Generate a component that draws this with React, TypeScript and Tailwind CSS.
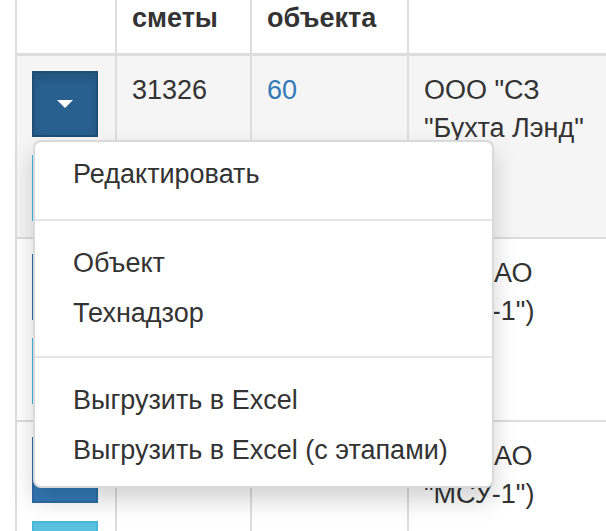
import React from 'react';

type Row = {
  id: string;
  objectId: string;
  customer: string;
  open?: boolean;
  hover?: boolean;
};

const rows: Row[] = [
  { id: '31326', objectId: '60', customer: 'ООО "СЗ "Бухта Лэнд"', open: true, hover: true },
  { id: '31325', objectId: '59', customer: 'ДСК (АО "МСУ-1")' },
  { id: '31324', objectId: '58', customer: 'ДСК (АО "МСУ-1")' },
];

function Caret() {
  return <span className="inline-block h-0 w-0 border-x-[8px] border-t-[8px] border-x-transparent border-t-white" />;
}

function ActionButtons({ open }: { open?: boolean }) {
  return (
    <div className="flex flex-col gap-[18px]">
      <button
        className={
          open
            ? 'flex h-[66px] w-[66px] items-center justify-center border-2 border-[#204d74] bg-[#286090] shadow-[inset_0_6px_10px_rgba(0,0,0,0.125)]'
            : 'flex h-[66px] w-[66px] items-center justify-center border-2 border-[#2e6da4] bg-[#337ab7]'
        }
      >
        <Caret />
      </button>
      <button className="h-[66px] w-[66px] border-2 border-[#46b8da] bg-[#5bc0de]" />
    </div>
  );
}

const menuItems = [['Редактировать'], ['Объект', 'Технадзор'], ['Выгрузить в Excel', 'Выгрузить в Excel (с этапами)']];

function DropdownMenu() {
  return (
    <ul className="absolute left-[33px] top-[140px] w-[461px] rounded-[8px] border-2 border-[rgba(0,0,0,0.15)] bg-white pb-[10px] pt-[7px] shadow-[0_12px_23px_rgba(0,0,0,0.175)]">
      {menuItems.map((group, gi) => (
        <React.Fragment key={gi}>
          {gi > 0 && <li className={gi === 1 ? 'mb-[17px] mt-[19px] h-[2px] bg-[#e5e5e5]' : 'my-[17px] h-[2px] bg-[#e5e5e5]'} />}
          {group.map((label) => (
            <li key={label} className="whitespace-nowrap px-[38px] py-[6px] text-[#333]">
              {label}
            </li>
          ))}
        </React.Fragment>
      ))}
    </ul>
  );
}

const th = 'border-2 border-b-[3px] border-[#ddd] px-[15px] pb-[15px] pt-0 text-left align-bottom font-bold';
const td = 'border-2 border-[#ddd] px-[15px] pb-[16px] pt-[15px] align-top';

export default function App() {
  return (
    <div className="relative h-[531px] w-[606px] overflow-hidden bg-white font-['Liberation_Sans',Arial,sans-serif] text-[27px] leading-[38.6px] text-[#333]">
      <div className="mt-[-3px] pl-[15px]">
        <table className="w-[624px] table-fixed border-collapse border-2 border-[#ddd]">
          <colgroup>
            <col className="w-[100px]" />
            <col className="w-[135px]" />
            <col className="w-[157px]" />
            <col className="w-[232px]" />
          </colgroup>
          <thead>
            <tr>
              <th className={th} />
              <th className={th}>сметы</th>
              <th className={th}>объекта</th>
              <th className={th} />
            </tr>
          </thead>
          <tbody>
            {rows.map((row) => (
              <tr key={row.id} className={row.hover ? 'bg-[#f5f5f5]' : 'bg-white'}>
                <td className={td}>
                  <ActionButtons open={row.open} />
                </td>
                <td className={td}>{row.id}</td>
                <td className={td}>
                  <a className="text-[#337ab7]">{row.objectId}</a>
                </td>
                <td className={td + ' pr-[30px]'}>{row.customer}</td>
              </tr>
            ))}
          </tbody>
        </table>
      </div>
      <DropdownMenu />
    </div>
  );
}
